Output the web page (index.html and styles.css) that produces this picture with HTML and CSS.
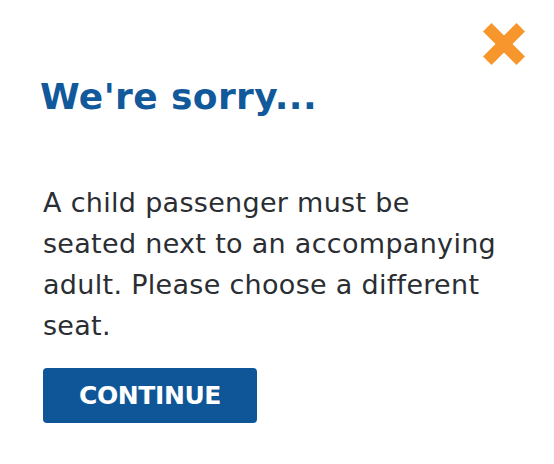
FILE: index.html
```html
<!DOCTYPE html>
<html lang="en">
<head>
<meta charset="utf-8">
<title>We're sorry</title>
<link rel="stylesheet" href="styles.css">
</head>
<body>
<div class="dialog">
  <button class="close" aria-label="Close">
    <svg width="44" height="44" viewBox="0 0 44 44" aria-hidden="true">
      <path d="M5.25 5.25 L38.75 38.75 M38.75 5.25 L5.25 38.75" stroke="#f7962c" stroke-width="12" stroke-linecap="butt" fill="none"/>
    </svg>
  </button>
  <h1 class="title">We're sorry...</h1>
  <p class="message">A child passenger must be seated next to an accompanying adult. Please choose a different seat.</p>
  <button class="continue">CONTINUE</button>
</div>
</body>
</html>
```

FILE: styles.css
```css
html, body {
  margin: 0;
  padding: 0;
  background: #ffffff;
}

.dialog {
  position: relative;
  width: 554px;
  height: 464px;
  box-sizing: border-box;
  padding: 73px 45px 0 43px;
  font-family: "DejaVu Sans", sans-serif;
}

.close {
  position: absolute;
  top: 22px;
  right: 28px;
  width: 44px;
  height: 44px;
  padding: 0;
  border: 0;
  background: none;
  cursor: pointer;
}

.close svg {
  display: block;
}

.title {
  margin: 0 0 0 -3px;
  font-size: 36px;
  line-height: 48px;
  font-weight: 700;
  color: #11599b;
  letter-spacing: 0.4px;
}

.message {
  width: 466px;
  margin: 61px 0 0 0;
  font-size: 27px;
  line-height: 41px;
  color: #2a2e33;
  letter-spacing: 0.3px;
}

.continue {
  display: block;
  margin-top: 22px;
  width: 214px;
  height: 55px;
  border: 0;
  border-radius: 4px;
  background: #0f5699;
  color: #ffffff;
  font-family: "DejaVu Sans", sans-serif;
  font-size: 25px;
  font-weight: 700;
  letter-spacing: -0.4px;
  padding: 0;
}
```
